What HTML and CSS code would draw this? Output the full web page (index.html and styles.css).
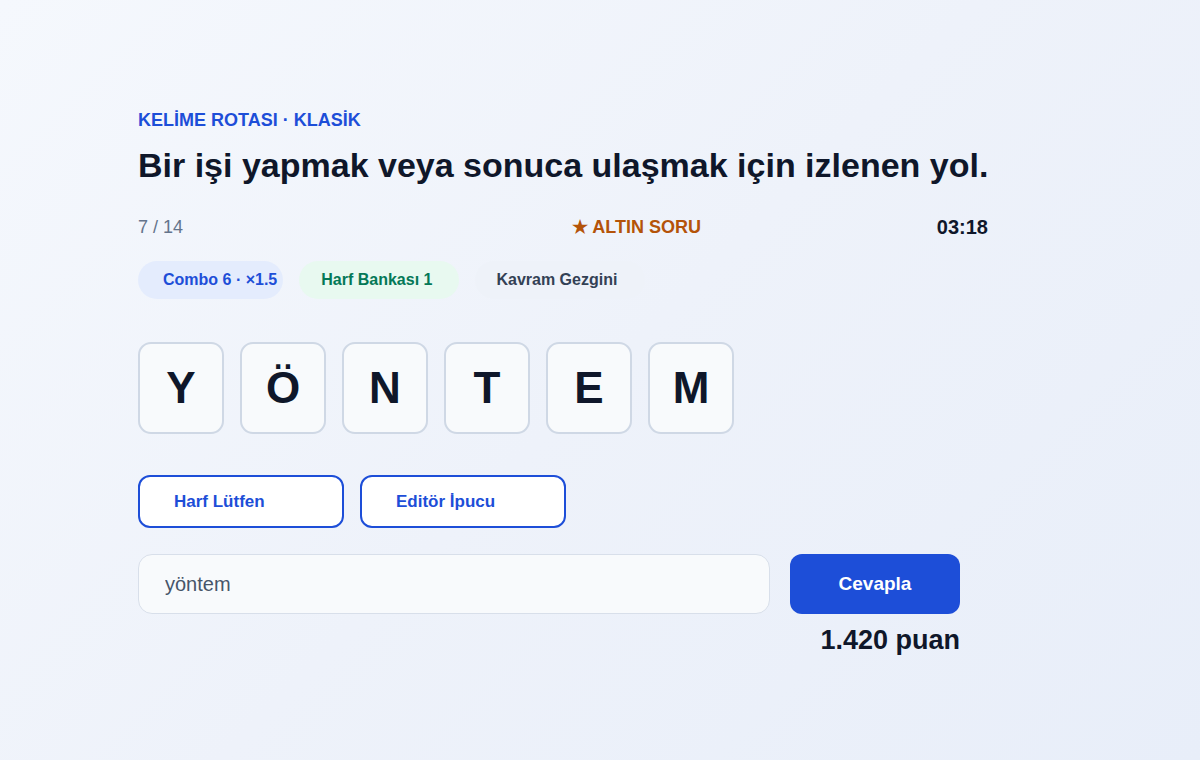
FILE: index.html
```html
<!DOCTYPE html>
<html lang="tr">
<head>
    <meta charset="UTF-8">
    <meta name="viewport" content="width=device-width, initial-scale=1.0">
    <title>Kelime Rotası</title>
    <link rel="stylesheet" href="styles.css">
</head>
<body>
    <div class="oyun">
        <div class="ust-baslik">KELİME ROTASI · KLASİK</div>
        <h1 class="soru">Bir işi yapmak veya sonuca ulaşmak için izlenen yol.</h1>

        <div class="bilgi-satiri">
            <span class="sayac">7 / 14</span>
            <span class="altin">★ ALTIN SORU</span>
            <span class="sure">03:18</span>
        </div>

        <div class="rozetler">
            <span class="rozet rozet-combo">Combo 6 · ×1.5</span>
            <span class="rozet rozet-banka">Harf Bankası 1</span>
            <span class="rozet rozet-gezgin">Kavram Gezgini</span>
        </div>

        <div class="harfler">
            <div class="harf">Y</div>
            <div class="harf">Ö</div>
            <div class="harf">N</div>
            <div class="harf">T</div>
            <div class="harf">E</div>
            <div class="harf">M</div>
        </div>

        <div class="ipuclari">
            <button class="ipucu-btn">Harf Lütfen</button>
            <button class="ipucu-btn">Editör İpucu</button>
        </div>

        <div class="cevap-satiri">
            <input class="cevap-input" type="text" value="yöntem">
            <button class="cevapla-btn">Cevapla</button>
        </div>
        <div class="puan">1.420 puan</div>
    </div>
</body>
</html>
```

FILE: styles.css
```css
html, body {
    height: 100%;
}
body {
    margin: 0;
    font-family: "Liberation Sans", Arial, sans-serif;
    background: linear-gradient(135deg, #f5f8fd 0%, #eef2fa 50%, #e8eef9 100%);
    color: #0f172a;
}
.oyun {
    width: 850px;
    margin-left: 138px;
    padding-top: 108px;
}
.ust-baslik {
    font-size: 18px;
    font-weight: bold;
    color: #1d4ed8;
    line-height: 24px;
}
.soru {
    margin: 12px 0 0;
    font-size: 34px;
    line-height: 42px;
    font-weight: bold;
    color: #0f172a;
    white-space: nowrap;
}
.bilgi-satiri {
    display: flex;
    align-items: center;
    margin-top: 27px;
    height: 28px;
}
.sayac {
    flex: 1;
    font-size: 18px;
    color: #64748b;
}
.altin {
    font-size: 18px;
    font-weight: bold;
    color: #b45309;
}
.sure {
    width: 287px;
    text-align: right;
    font-size: 20px;
    font-weight: bold;
    color: #0f172a;
}
.rozetler {
    display: flex;
    gap: 16px;
    margin-top: 20px;
}
.rozet {
    height: 38px;
    line-height: 38px;
    border-radius: 19px;
    font-size: 16px;
    font-weight: bold;
}
.rozet-combo {
    background-color: #e4ecfd;
    color: #1d4ed8;
    padding: 0 6px 0 25px;
}
.rozet-banka {
    background-color: #e8f9f0;
    color: #047857;
    padding: 0 27px 0 22px;
}
.rozet-gezgin {
    background-color: #eef2f9;
    color: #334155;
    padding: 0 28px 0 21px;
}
.harfler {
    display: flex;
    gap: 16px;
    margin-top: 43px;
}
.harf {
    width: 82px;
    height: 88px;
    border: 2px solid #cfd8e5;
    border-radius: 13px;
    background-color: #f8fafc;
    display: flex;
    align-items: center;
    justify-content: center;
    font-size: 44px;
    font-weight: bold;
    color: #0f172a;
}
.ipuclari {
    display: flex;
    gap: 16px;
    margin-top: 41px;
}
.ipucu-btn {
    width: 206px;
    height: 53px;
    border: 2px solid #1d4ed8;
    border-radius: 12px;
    background-color: #fff;
    color: #1d4ed8;
    font-family: inherit;
    font-size: 17px;
    font-weight: bold;
    text-align: left;
    padding: 0 0 0 34px;
}
.cevap-satiri {
    display: flex;
    gap: 20px;
    margin-top: 26px;
    width: 822px;
}
.cevap-input {
    flex: 1;
    height: 60px;
    box-sizing: border-box;
    border: 1px solid #d8dfea;
    border-radius: 14px;
    background-color: #f8fafc;
    padding: 0 26px;
    font-family: inherit;
    font-size: 20px;
    color: #475569;
    outline: none;
}
.cevapla-btn {
    width: 170px;
    height: 60px;
    border: none;
    border-radius: 12px;
    background-color: #1d4ed8;
    color: #fff;
    font-family: inherit;
    font-size: 19px;
    font-weight: bold;
}
.puan {
    width: 822px;
    text-align: right;
    margin-top: 11px;
    font-size: 27px;
    font-weight: bold;
    color: #0f172a;
}
```
